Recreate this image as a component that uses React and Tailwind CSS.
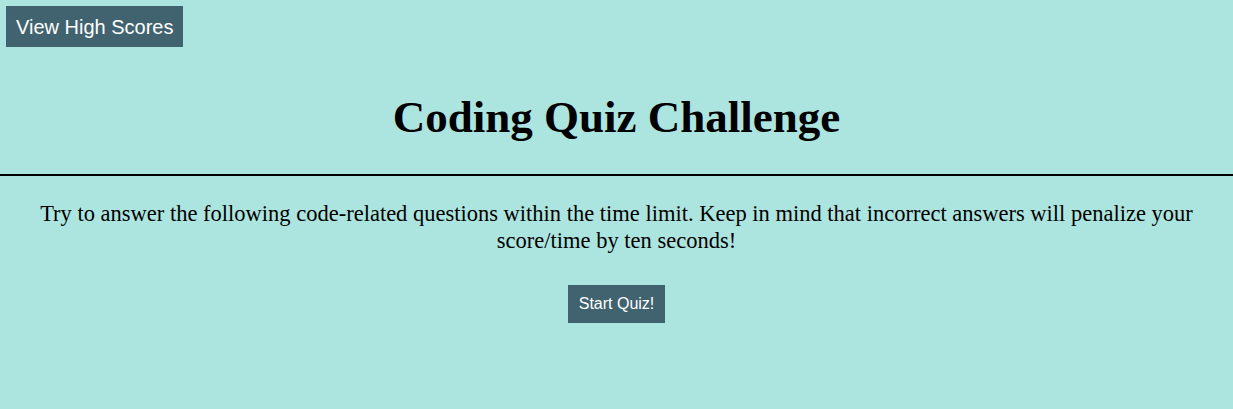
import React from 'react';

const App = () => {
  return (
    <div className="min-h-[409px] bg-[#ace5df] font-['Liberation_Serif',serif] text-black">
      <header className="border-b-2 border-black">
        <div className="p-[6px]">
          <button className="h-[41px] px-[10px] bg-[#41636f] text-white text-[20px] font-['Liberation_Sans',Arial,sans-serif]">
            View High Scores
          </button>
        </div>
        <h1 className="text-center text-[45px] font-bold leading-none pt-[42px] pb-[34px]">
          Coding Quiz Challenge
        </h1>
      </header>
      <main className="flex flex-col items-center px-[36px] pt-[24px]">
        <p className="text-center text-[22.5px] leading-[27px]">
          Try to answer the following code-related questions within the time limit. Keep in mind that incorrect answers will penalize your score/time by ten seconds!
        </p>
        <button className="mt-[31px] h-[38px] px-[10.5px] bg-[#41636f] text-white text-[16px] font-['Liberation_Sans',Arial,sans-serif]">
          Start Quiz!
        </button>
      </main>
    </div>
  );
};

export default App;
